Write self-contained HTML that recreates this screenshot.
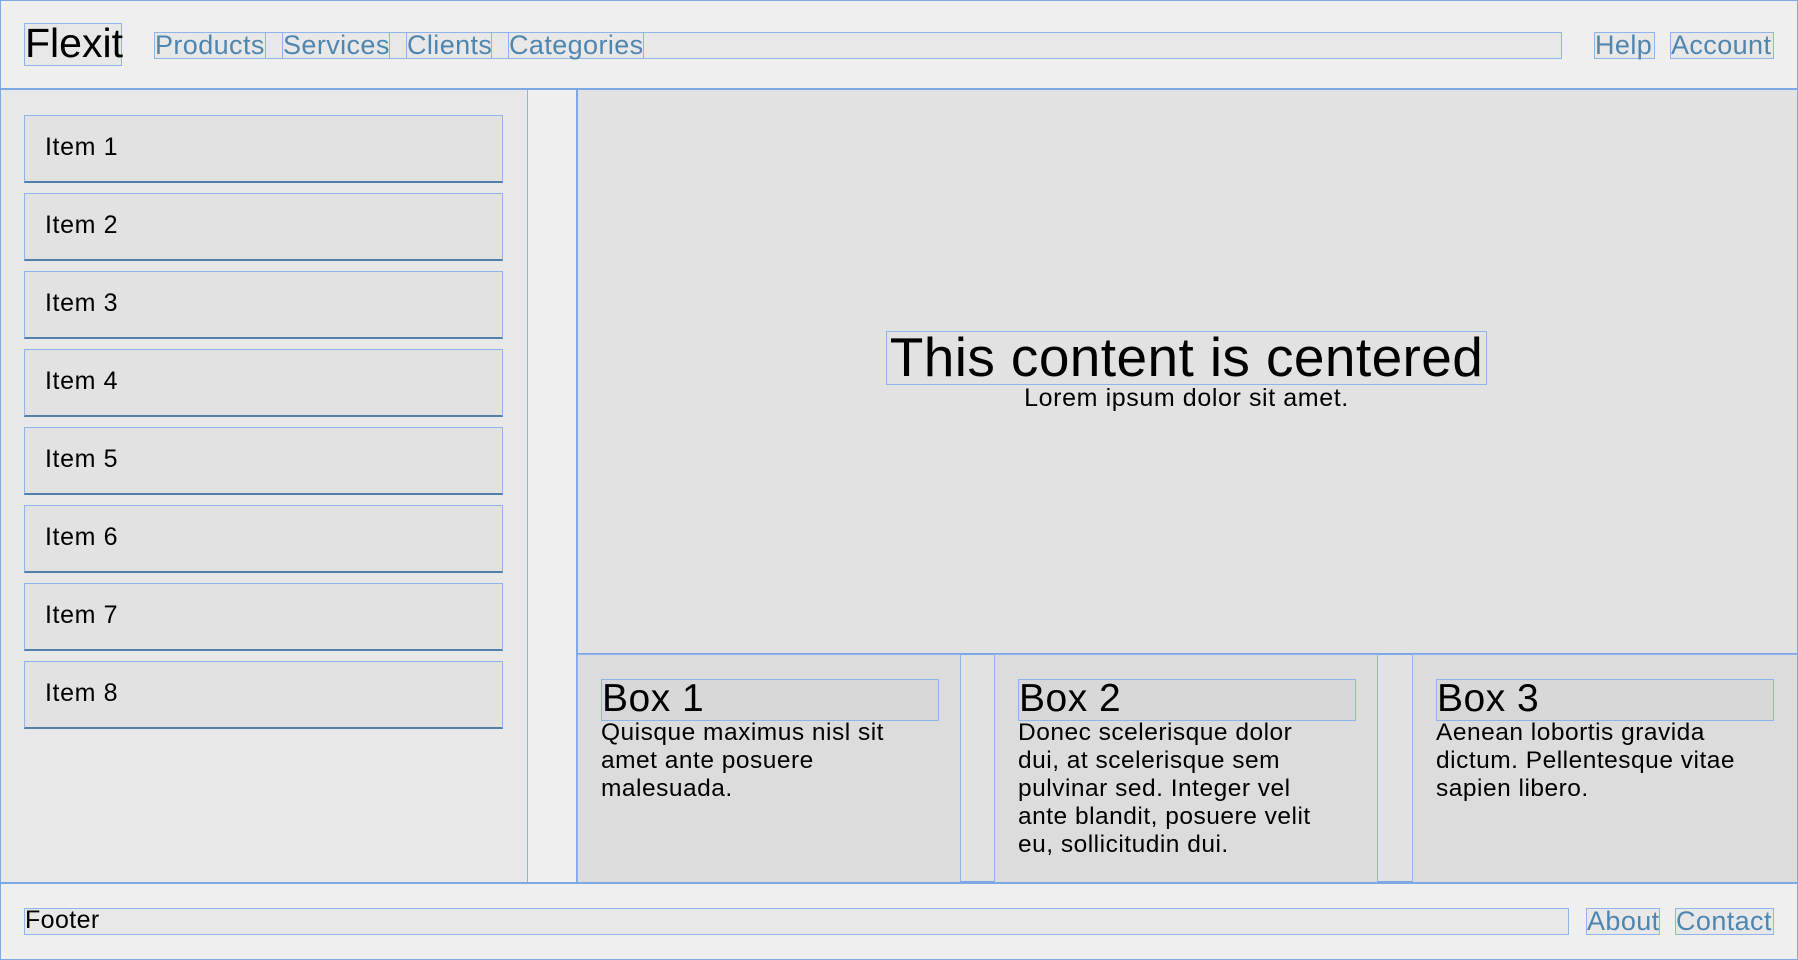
<!DOCTYPE html>
<html><head><meta charset="utf-8"><style>
*{box-sizing:border-box;margin:0;padding:0}
body{width:1798px;height:960px;overflow:hidden;background:#efefef;font-family:"Liberation Sans",sans-serif;color:#000;position:relative}
.a{position:absolute}
.bl{border:1px solid #8fb4ec}
#frame{left:0;top:0;width:1798px;height:960px;border:1px solid #7ea7e6;pointer-events:none}
.nav{color:#4f86b0;font-size:27px;line-height:25px;background:#e8e8e8;white-space:nowrap;letter-spacing:0.4px}
.item{left:24px;width:479px;height:68px;background:#e2e2e2;border:1px solid #8fb4ec;border-bottom:2px solid #5180aa;font-size:25px;padding-left:20px;line-height:62px;letter-spacing:0.6px}
.box{top:654px;height:229px;background:#dcdcdc;border:1px solid #8fb4ec}
.box h2{position:absolute;left:23px;top:24px;width:338px;height:42px;border:1px solid #8fb4ec;background:#d8d8d8;font-weight:normal;font-size:39px;line-height:38px;letter-spacing:0.5px}
.box p{position:absolute;left:23px;top:64px;width:328px;font-size:24.5px;line-height:28px;letter-spacing:0.5px}
</style></head><body>
<div class="a" style="left:0;top:0;width:1798px;height:90px;border-bottom:2px solid #7ea7e6"></div>
<div class="a bl" style="left:24px;top:23px;width:98px;height:43px;font-size:41px;line-height:38px;background:#e8e8e8">Flexit</div>
<div class="a bl" style="left:154px;top:32px;width:1408px;height:27px;background:#e8e8e8"></div>
<div class="a bl nav" style="left:154px;top:32px;width:112px;height:27px">Products</div>
<div class="a bl nav" style="left:282px;top:32px;width:108px;height:27px">Services</div>
<div class="a bl nav" style="left:406px;top:32px;width:86px;height:27px">Clients</div>
<div class="a bl nav" style="left:508px;top:32px;width:136px;height:27px">Categories</div>
<div class="a bl nav" style="left:1594px;top:32px;width:61px;height:27px">Help</div>
<div class="a bl nav" style="left:1670px;top:32px;width:104px;height:27px">Account</div>
<div class="a" style="left:0;top:90px;width:528px;height:793px;background:#e8e8e8;border-right:1px solid #8fb4ec"></div>
<div class="a item" style="top:115px">Item 1</div>
<div class="a item" style="top:193px">Item 2</div>
<div class="a item" style="top:271px">Item 3</div>
<div class="a item" style="top:349px">Item 4</div>
<div class="a item" style="top:427px">Item 5</div>
<div class="a item" style="top:505px">Item 6</div>
<div class="a item" style="top:583px">Item 7</div>
<div class="a item" style="top:661px">Item 8</div>
<div class="a" style="left:576px;top:90px;width:1222px;height:793px;background:#e2e2e2;border-left:2px solid #7ea7e6;border-bottom:2px solid #7ea7e6"></div>
<div class="a bl" style="left:886px;top:331px;width:601px;height:54px;font-size:55px;line-height:50px;text-align:center;white-space:nowrap;letter-spacing:0.4px">This content is centered</div>
<div class="a" style="left:886px;top:384px;width:601px;font-size:25px;line-height:28px;text-align:center;letter-spacing:0.6px">Lorem ipsum dolor sit amet.</div>
<div class="a" style="left:577px;top:653px;width:1221px;height:2px;background:#7ea7e6"></div>
<div class="a box" style="left:577px;width:384px"><h2>Box 1</h2><p>Quisque maximus nisl sit amet ante posuere malesuada.</p></div>
<div class="a box" style="left:994px;width:384px"><h2>Box 2</h2><p>Donec scelerisque dolor<br>dui, at scelerisque sem<br>pulvinar sed. Integer vel<br>ante blandit, posuere velit<br>eu, sollicitudin dui.</p></div>
<div class="a box" style="left:1412px;width:386px"><h2>Box 3</h2><p>Aenean lobortis gravida dictum. Pellentesque vitae sapien libero.</p></div>
<div class="a" style="left:0;top:882px;width:1798px;height:2px;background:#7ea7e6"></div>
<div class="a bl" style="left:24px;top:908px;width:1545px;height:27px;background:#e8e8e8;font-size:25px;line-height:23px;letter-spacing:0.4px">Footer</div>
<div class="a bl nav" style="left:1586px;top:908px;width:74px;height:27px">About</div>
<div class="a bl nav" style="left:1675px;top:908px;width:99px;height:27px">Contact</div>
<div class="a" id="frame"></div>
</body></html>
